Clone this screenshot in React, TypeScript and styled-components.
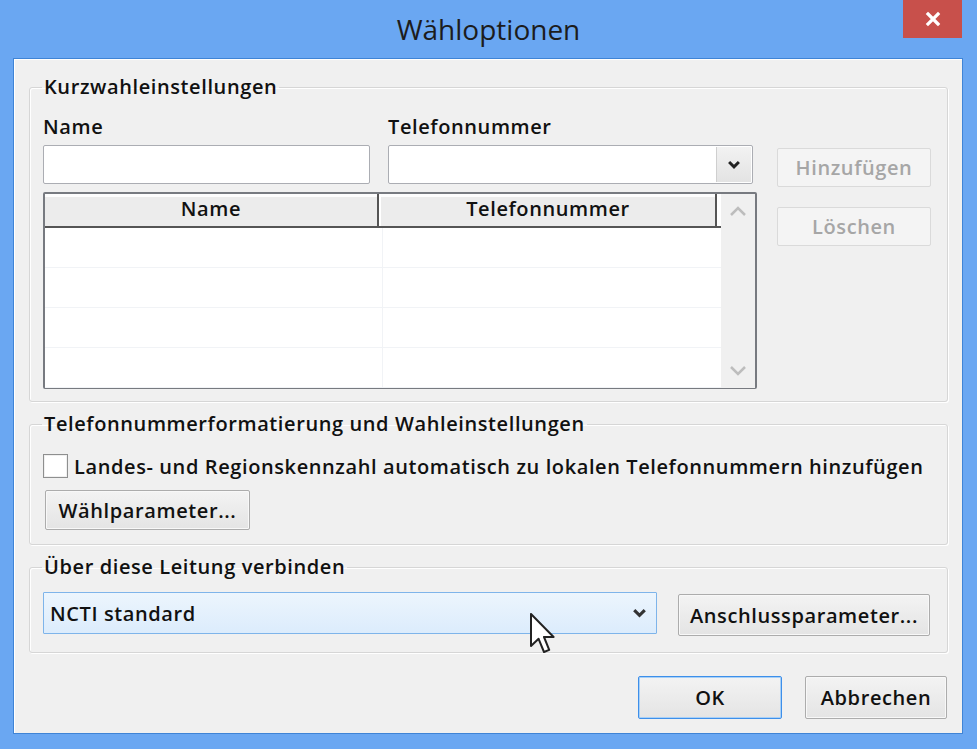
import React from "react";
import styled, { createGlobalStyle } from "styled-components";

const GlobalStyle = createGlobalStyle`
  html, body { margin: 0; padding: 0; background: #6aa7f2; }
  * { box-sizing: border-box; }
`;

const Frame = styled.div`
  position: relative;
  width: 977px;
  height: 749px;
  background: #6aa7f2;
  display: flex;
  flex-direction: column;
  font-family: "Open Sans", "Noto Sans", "DejaVu Sans", sans-serif;
  color: #111;
  overflow: hidden;
`;

const TitleBar = styled.header`
  height: 58px;
  flex: none;
  display: grid;
  grid-template-columns: 1fr auto 1fr;
  align-items: start;
`;

const Title = styled.h1`
  grid-column: 2;
  margin: 0;
  font-size: 28px;
  font-weight: 400;
  line-height: 58px;
  color: #1c1c1c;
`;

const CloseButton = styled.button`
  grid-column: 3;
  justify-self: end;
  width: 59px;
  height: 38px;
  margin-right: 15px;
  padding: 0;
  border: none;
  background: #c8504b;
  display: flex;
  align-items: center;
  justify-content: center;
`;

const Client = styled.main`
  flex: 1;
  margin: 0 14px 16px 13px;
  background: #f0f0f0;
  border: 1px solid #3f84d6;
  box-shadow: inset 1px 1px 0 #ffffff;
  padding: 16px 14px 14px 15px;
  display: flex;
  flex-direction: column;
  font-size: 20px;
  font-weight: 600;
  letter-spacing: 0.6px;
`;

const Group = styled.fieldset<{ $gap?: number; $pad: string }>`
  margin: ${(p) => p.$gap ?? 0}px 0 0 0;
  padding: ${(p) => p.$pad};
  border: 1px solid #d6d6d6;
  border-radius: 3px;
  box-shadow: inset 1px 1px 0 #ffffff, 1px 1px 0 #ffffff;
  min-width: 0;
`;

const Legend = styled.legend`
  margin-left: -1px;
  padding: 0 2px;
  line-height: 24px;
`;

const SpeedDial = styled.div`
  display: flex;
  gap: 20px;
`;

const LeftColumn = styled.div`
  width: 714px;
  display: flex;
  flex-direction: column;
`;

const FieldRow = styled.div`
  display: flex;
  gap: 18px;
`;

const Field = styled.label<{ $width: number }>`
  width: ${(p) => p.$width}px;
  display: flex;
  flex-direction: column;
`;

const FieldLabel = styled.span`
  line-height: 24px;
  margin-bottom: 6px;
`;

const TextBox = styled.div`
  height: 39px;
  background: #fff;
  border: 1px solid #abadb3;
  border-radius: 2px;
  display: flex;
  justify-content: flex-end;
`;

const DropButton = styled.div`
  width: 35px;
  margin: 1px;
  background: linear-gradient(#f2f2f2, #e3e3e3);
  border-left: 1px solid #cfcfcf;
  display: flex;
  align-items: center;
  justify-content: center;
`;

const ListView = styled.div`
  margin-top: 8px;
  height: 197px;
  border: 2px solid #777a80;
  border-radius: 2px;
  background: #fff;
  display: grid;
  grid-template-columns: 1fr 34px;
`;

const ListBody = styled.div`
  display: flex;
  flex-direction: column;
`;

const HeaderRow = styled.div`
  height: 34px;
  display: grid;
  grid-template-columns: 336px 338px;
  border-bottom: 2px solid #555;
`;

const HeaderCell = styled.div`
  background: linear-gradient(#fdfdfd 0, #fdfdfd 3px, #ececec 3px);
  border-right: 2px solid #555;
  margin-right: 2px;
  line-height: 30px;
  text-align: center;
`;

const Row = styled.div`
  height: 40px;
  display: grid;
  grid-template-columns: 338px 1fr;
  border-bottom: 1px solid #f1f3f6;
`;

const Cell = styled.div`
  border-right: 1px solid #f1f3f6;
`;

const ScrollBar = styled.div`
  background: #f0f0f0;
  display: flex;
  flex-direction: column;
  justify-content: space-between;
`;

const ScrollArrow = styled.div`
  height: 34px;
  display: flex;
  align-items: center;
  justify-content: center;
`;

const RightColumn = styled.div`
  width: 154px;
  padding-top: 33px;
  display: flex;
  flex-direction: column;
  gap: 20px;
`;

const Button = styled.button<{ $width?: number; $height: number; $primary?: boolean }>`
  width: ${(p) => (p.$width ? `${p.$width}px` : "100%")};
  height: ${(p) => p.$height}px;
  padding: 0;
  font: inherit;
  letter-spacing: inherit;
  color: #111;
  background: linear-gradient(#f3f3f3, #e4e4e4);
  border: 1px solid ${(p) => (p.$primary ? "#3d8fea" : "#acacac")};
  box-shadow: ${(p) => (p.$primary ? "inset 0 0 0 1px #a8d0f7" : "inset 0 0 0 1px #f8f8f8")};
  border-radius: 2px;

  &:disabled {
    color: #a6a6a6;
    background: #f4f4f4;
    border-color: #dadada;
    box-shadow: none;
  }
`;

const CheckRow = styled.label`
  display: flex;
  align-items: center;
  gap: 6px;
  height: 24px;
  white-space: nowrap;
`;

const CheckBox = styled.span`
  flex: none;
  width: 25px;
  height: 24px;
  background: #fff;
  border: 1px solid #8e8f8f;
  box-shadow: inset 0 0 0 1px #f0f0f0;
`;

const DialRow = styled.div`
  margin-top: 12px;
  padding-left: 2px;
`;

const LineRow = styled.div`
  display: flex;
  align-items: flex-start;
  gap: 21px;
`;

const ComboHover = styled.div`
  width: 614px;
  height: 42px;
  background: linear-gradient(#ecf5fd, #dcecfc);
  border: 1px solid #7eb4ea;
  border-radius: 1px;
  display: flex;
  align-items: center;
  justify-content: space-between;
  padding: 0 9px 0 6px;
`;

const ConnectButtonWrap = styled.div`
  padding-top: 2px;
`;

const Footer = styled.footer`
  margin-top: 23px;
  display: flex;
  justify-content: flex-end;
  gap: 23px;
  padding-right: 1px;
`;

const Cursor = styled.svg`
  position: absolute;
  left: 530px;
  top: 613px;
`;

const Chevron = ({ color, size = 14, weight = 3 }: { color: string; size?: number; weight?: number }) => (
  <svg width={size} height={size * 0.7} viewBox="0 0 14 10">
    <polyline points="2,2 7,7 12,2" fill="none" stroke={color} strokeWidth={weight} />
  </svg>
);

const ChevronUp = () => (
  <svg width="18" height="12" viewBox="0 0 18 12">
    <polyline points="2,10 9,3 16,10" fill="none" stroke="#bdbdbd" strokeWidth="2.5" />
  </svg>
);

const ChevronDown = () => (
  <svg width="18" height="12" viewBox="0 0 18 12">
    <polyline points="2,2 9,9 16,2" fill="none" stroke="#bdbdbd" strokeWidth="2.5" />
  </svg>
);

const rows = [0, 1, 2, 3];

export default function App() {
  return (
    <>
      <GlobalStyle />
      <Frame>
        <TitleBar>
          <Title>Wähloptionen</Title>
          <CloseButton aria-label="Schließen">
            <svg width="16" height="16" viewBox="0 0 16 16">
              <path d="M3 3 L13 13 M13 3 L3 13" stroke="#fff" strokeWidth="3.2" strokeLinecap="square" />
            </svg>
          </CloseButton>
        </TitleBar>

        <Client>
          <Group $pad="16px 16px 12px 13px">
            <Legend>Kurzwahleinstellungen</Legend>
            <SpeedDial>
              <LeftColumn>
                <FieldRow>
                  <Field $width={327}>
                    <FieldLabel>Name</FieldLabel>
                    <TextBox />
                  </Field>
                  <Field $width={365}>
                    <FieldLabel>Telefonnummer</FieldLabel>
                    <TextBox>
                      <DropButton>
                        <Chevron color="#222" />
                      </DropButton>
                    </TextBox>
                  </Field>
                </FieldRow>
                <ListView>
                  <ListBody>
                    <HeaderRow>
                      <HeaderCell>Name</HeaderCell>
                      <HeaderCell>Telefonnummer</HeaderCell>
                    </HeaderRow>
                    {rows.map((r) => (
                      <Row key={r}>
                        <Cell />
                        <div />
                      </Row>
                    ))}
                  </ListBody>
                  <ScrollBar>
                    <ScrollArrow>
                      <ChevronUp />
                    </ScrollArrow>
                    <ScrollArrow>
                      <ChevronDown />
                    </ScrollArrow>
                  </ScrollBar>
                </ListView>
              </LeftColumn>
              <RightColumn>
                <Button $height={39} disabled>Hinzufügen</Button>
                <Button $height={39} disabled>Löschen</Button>
              </RightColumn>
            </SpeedDial>
          </Group>

          <Group $gap={10} $pad="18px 16px 14px 13px">
            <Legend>Telefonnummerformatierung und Wahleinstellungen</Legend>
            <CheckRow>
              <CheckBox />
              Landes- und Regionskennzahl automatisch zu lokalen Telefonnummern hinzufügen
            </CheckRow>
            <DialRow>
              <Button $width={205} $height={40}>Wählparameter...</Button>
            </DialRow>
          </Group>

          <Group $gap={10} $pad="13px 16px 16px 13px">
            <Legend>Über diese Leitung verbinden</Legend>
            <LineRow>
              <ComboHover>
                NCTI standard
                <Chevron color="#333" size={15} />
              </ComboHover>
              <ConnectButtonWrap>
                <Button $width={252} $height={42}>Anschlussparameter...</Button>
              </ConnectButtonWrap>
            </LineRow>
          </Group>

          <Footer>
            <Button $width={144} $height={43} $primary>OK</Button>
            <Button $width={142} $height={43}>Abbrechen</Button>
          </Footer>
        </Client>

        <Cursor width="26" height="42" viewBox="0 0 13 21">
          <path d="M0.5 0.5 L0.5 16.5 L4.3 12.9 L7 19.5 L9.6 18.4 L7 12 L11.8 12 Z" fill="#fff" stroke="#222" strokeWidth="1" strokeLinejoin="round" />
        </Cursor>
      </Frame>
    </>
  );
}
